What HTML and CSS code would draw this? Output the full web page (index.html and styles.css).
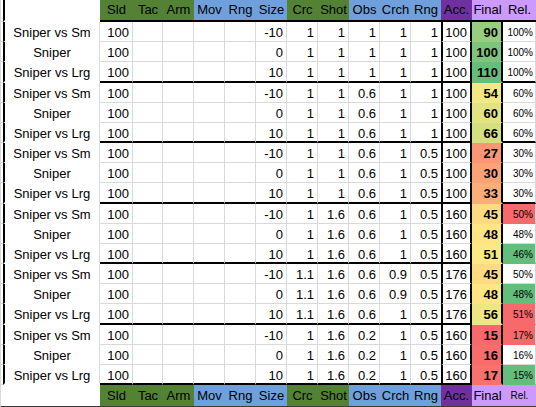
FILE: index.html
```html
<!DOCTYPE html>
<html>
<head>
<meta charset="utf-8">
<link rel="stylesheet" href="styles.css">
</head>
<body>
<div class="sheet">
  <div class="row head">
    <div class="sp"></div><div class="nm"></div>
    <div class="g">Sld</div><div class="g">Tac</div><div class="g">Arm</div>
    <div class="b">Mov</div><div class="b">Rng</div><div class="b">Size</div>
    <div class="g">Crc</div><div class="g">Shot</div>
    <div class="b">Obs</div><div class="b">Crch</div><div class="b">Rng</div>
    <div class="p">Acc.</div><div class="lp">Final</div><div class="lp">Rel.</div>
  </div>

  <div class="row"><div class="sp"></div><div class="nm">Sniper vs Sm</div><div>100</div><div></div><div></div><div></div><div></div><div>-10</div><div>1</div><div>1</div><div>1</div><div>1</div><div class="pre">1</div><div class="acc">100</div><div class="fin" style="background:rgb(151,205,126)">90</div><div class="rel">100%</div></div>
  <div class="row"><div class="sp"></div><div class="nm">Sniper</div><div>100</div><div></div><div></div><div></div><div></div><div>0</div><div>1</div><div>1</div><div>1</div><div>1</div><div class="pre">1</div><div class="acc">100</div><div class="fin" style="background:rgb(125,197,124)">100</div><div class="rel">100%</div></div>
  <div class="row end"><div class="sp"></div><div class="nm">Sniper vs Lrg</div><div>100</div><div></div><div></div><div></div><div></div><div>10</div><div>1</div><div>1</div><div>1</div><div>1</div><div class="pre">1</div><div class="acc">100</div><div class="fin" style="background:rgb(99,190,123)">110</div><div class="rel">100%</div></div>

  <div class="row"><div class="sp"></div><div class="nm">Sniper vs Sm</div><div>100</div><div></div><div></div><div></div><div></div><div>-10</div><div>1</div><div>1</div><div>0.6</div><div>1</div><div class="pre">1</div><div class="acc">100</div><div class="fin" style="background:rgb(243,232,131)">54</div><div class="rel">60%</div></div>
  <div class="row"><div class="sp"></div><div class="nm">Sniper</div><div>100</div><div></div><div></div><div></div><div></div><div>0</div><div>1</div><div>1</div><div>0.6</div><div>1</div><div class="pre">1</div><div class="acc">100</div><div class="fin" style="background:rgb(228,227,130)">60</div><div class="rel">60%</div></div>
  <div class="row end"><div class="sp"></div><div class="nm">Sniper vs Lrg</div><div>100</div><div></div><div></div><div></div><div></div><div>10</div><div>1</div><div>1</div><div>0.6</div><div>1</div><div class="pre">1</div><div class="acc">100</div><div class="fin" style="background:rgb(212,223,130)">66</div><div class="rel">60%</div></div>

  <div class="row"><div class="sp"></div><div class="nm">Sniper vs Sm</div><div>100</div><div></div><div></div><div></div><div></div><div>-10</div><div>1</div><div>1</div><div>0.6</div><div>1</div><div class="pre">0.5</div><div class="acc">100</div><div class="fin" style="background:rgb(250,150,116)">27</div><div class="rel">30%</div></div>
  <div class="row"><div class="sp"></div><div class="nm">Sniper</div><div>100</div><div></div><div></div><div></div><div></div><div>0</div><div>1</div><div>1</div><div>0.6</div><div>1</div><div class="pre">0.5</div><div class="acc">100</div><div class="fin" style="background:rgb(251,162,118)">30</div><div class="rel">30%</div></div>
  <div class="row end"><div class="sp"></div><div class="nm">Sniper vs Lrg</div><div>100</div><div></div><div></div><div></div><div></div><div>10</div><div>1</div><div>1</div><div>0.6</div><div>1</div><div class="pre">0.5</div><div class="acc">100</div><div class="fin" style="background:rgb(252,173,120)">33</div><div class="rel">30%</div></div>

  <div class="row"><div class="sp"></div><div class="nm">Sniper vs Sm</div><div>100</div><div></div><div></div><div></div><div></div><div>-10</div><div>1</div><div>1.6</div><div>0.6</div><div>1</div><div class="pre">0.5</div><div class="acc">160</div><div class="fin" style="background:rgb(254,218,129)">45</div><div class="rel red">50%</div></div>
  <div class="row"><div class="sp"></div><div class="nm">Sniper</div><div>100</div><div></div><div></div><div></div><div></div><div>0</div><div>1</div><div>1.6</div><div>0.6</div><div>1</div><div class="pre">0.5</div><div class="acc">160</div><div class="fin" style="background:rgb(255,229,131)">48</div><div class="rel">48%</div></div>
  <div class="row end"><div class="sp"></div><div class="nm">Sniper vs Lrg</div><div>100</div><div></div><div></div><div></div><div></div><div>10</div><div>1</div><div>1.6</div><div>0.6</div><div>1</div><div class="pre">0.5</div><div class="acc">160</div><div class="fin" style="background:rgb(251,234,132)">51</div><div class="rel grn">46%</div></div>

  <div class="row"><div class="sp"></div><div class="nm">Sniper vs Sm</div><div>100</div><div></div><div></div><div></div><div></div><div>-10</div><div>1.1</div><div>1.6</div><div>0.6</div><div>0.9</div><div class="pre">0.5</div><div class="acc">176</div><div class="fin" style="background:rgb(254,218,129)">45</div><div class="rel">50%</div></div>
  <div class="row"><div class="sp"></div><div class="nm">Sniper</div><div>100</div><div></div><div></div><div></div><div></div><div>0</div><div>1.1</div><div>1.6</div><div>0.6</div><div>0.9</div><div class="pre">0.5</div><div class="acc">176</div><div class="fin" style="background:rgb(255,229,131)">48</div><div class="rel grn">48%</div></div>
  <div class="row end"><div class="sp"></div><div class="nm">Sniper vs Lrg</div><div>100</div><div></div><div></div><div></div><div></div><div>10</div><div>1.1</div><div>1.6</div><div>0.6</div><div>1</div><div class="pre">0.5</div><div class="acc">176</div><div class="fin" style="background:rgb(238,230,131)">56</div><div class="rel red">51%</div></div>

  <div class="row"><div class="sp"></div><div class="nm">Sniper vs Sm</div><div>100</div><div></div><div></div><div></div><div></div><div>-10</div><div>1</div><div>1.6</div><div>0.2</div><div>1</div><div class="pre">0.5</div><div class="acc">160</div><div class="fin" style="background:rgb(248,105,107)">15</div><div class="rel red">17%</div></div>
  <div class="row"><div class="sp"></div><div class="nm">Sniper</div><div>100</div><div></div><div></div><div></div><div></div><div>0</div><div>1</div><div>1.6</div><div>0.2</div><div>1</div><div class="pre">0.5</div><div class="acc">160</div><div class="fin" style="background:rgb(248,109,108)">16</div><div class="rel">16%</div></div>
  <div class="row end"><div class="sp"></div><div class="nm">Sniper vs Lrg</div><div>100</div><div></div><div></div><div></div><div></div><div>10</div><div>1</div><div>1.6</div><div>0.2</div><div>1</div><div class="pre">0.5</div><div class="acc">160</div><div class="fin" style="background:rgb(248,113,108)">17</div><div class="rel grn">15%</div></div>

  <div class="row foot">
    <div class="sp"></div><div class="nm"></div>
    <div class="g">Sld</div><div class="g">Tac</div><div class="g">Arm</div>
    <div class="b">Mov</div><div class="b">Rng</div><div class="b">Size</div>
    <div class="g">Crc</div><div class="g">Shot</div>
    <div class="b">Obs</div><div class="b">Crch</div><div class="b">Rng</div>
    <div class="p">Acc.</div><div class="lp">Final</div><div class="lp small">Rel.</div>
  </div>
</div>
</body>
</html>
```
FILE: styles.css
```css
html, body {
  margin: 0;
  padding: 0;
  background: #fff;
  overflow: hidden;
}

.sheet {
  display: grid;
  grid-template-columns: 3px 97px 33px 30px 31px 31px 31px 31px 31px 31px 31px 31px 30px 31px 31px 33px;
  grid-template-rows:
    22px
    20px 20px 21px
    20px 20px 20px
    20px 20px 21px
    20px 20px 20px
    20px 20px 21px
    20px 20px 20px
    23px;
  font-family: "Liberation Sans", Arial, sans-serif;
  font-size: 13px;
  color: #000;
  width: 536px;
}

.row {
  display: contents;
}

.row > div {
  box-sizing: border-box;
  border-right: 1px solid #d9d9d9;
  border-bottom: 1px solid #d9d9d9;
  padding: 1px 3px 0 0;
  text-align: right;
  line-height: 19px;
  white-space: nowrap;
  overflow: hidden;
}

.row > .sp {
  border-right: none;
  border-left: 1px solid #d9d9d9;
  padding: 0;
}

.row > .nm {
  border-left: 2px solid #000;
  border-bottom-color: transparent;
  text-align: center;
  padding-right: 0;
}

.row > .pre {
  border-right: none;
}

.row > .acc {
  border-left: 2px solid #000;
  border-right: 2px solid #000;
}

.row > .fin {
  border-right: 2px solid #000;
  border-bottom-color: transparent;
  font-weight: bold;
}

.row > .rel {
  font-size: 10px;
  padding-right: 2px;
}

.row > .red {
  background: #f8696b;
  border-bottom-color: transparent;
}

.row > .grn {
  background: #63be7b;
  border-bottom-color: transparent;
}

.end > div {
  border-bottom: 2px solid #000;
}

.end > .sp {
  border-bottom: 1px solid #d9d9d9;
}

/* header & footer rows */
.head > div,
.foot > div {
  border-right: none;
  text-align: center;
  padding: 0;
}

.head > div {
  border-bottom: 2px solid #000;
  line-height: 20px;
}

.head > .sp {
  border-bottom: 1px solid #d9d9d9;
}

.foot > div {
  border-bottom: 2px solid #3a3a3a;
  line-height: 21px;
}

.foot > .nm {
  border-left: none;
  border-bottom: 2px solid #3a3a3a;
}

.foot > .sp {
  border-left: 1px solid #d9d9d9;
}

.g {
  background: #548235;
}

.b {
  background: #6fa0dc;
}

.p {
  background: #7030a0;
}

.lp {
  background: #cc99ff;
}

.foot > .small {
  font-size: 10px;
}
```
